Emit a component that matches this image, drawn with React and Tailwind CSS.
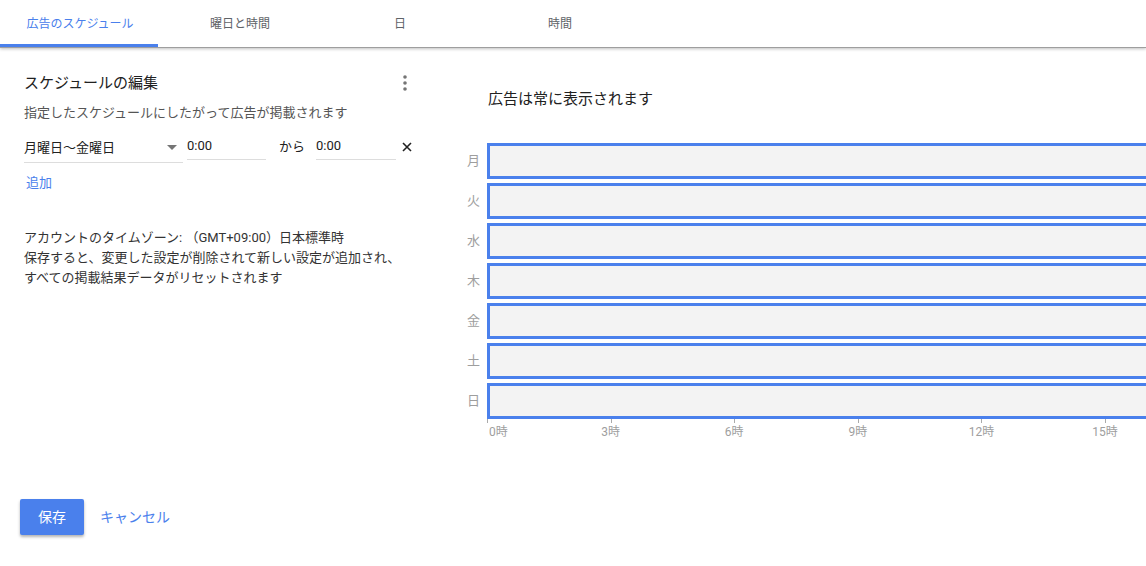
import { useState } from "react";

const days = ["月", "火", "水", "木", "金", "土", "日"];
const hours = [0, 3, 6, 9, 12, 15];
const HOUR = 41.2;

function App() {
  const [tab, setTab] = useState(0);

  const tabs = ["広告のスケジュール", "曜日と時間", "日", "時間"];

  return (
    <div
      className="min-h-screen bg-white overflow-hidden text-[#212121]"
      style={{ fontFamily: 'Roboto, "Noto Sans CJK JP", sans-serif' }}
    >
      {/* Tabs */}
      <div className="h-[48px] flex border-b border-[#9e9e9e] shadow-[0_1px_3px_rgba(0,0,0,0.25)]">
        {tabs.map((t, i) => (
          <button
            key={t}
            onClick={() => setTab(i)}
            className={`relative w-[160px] flex items-center justify-center text-[12px] ${
              tab === i ? "text-[#4a80ec]" : "text-[#5f6368]"
            }`}
          >
            {t}
            {tab === i && (
              <span className="absolute left-0 right-[2px] bottom-0 h-[3px] bg-[#4a80ec]" />
            )}
          </button>
        ))}
      </div>

      <div className="flex">
        {/* Left panel */}
        <div className="w-[460px] shrink-0 pl-[24px] pr-[46px] pt-[25px]">
          <div className="flex items-center justify-between">
            <h2 className="text-[15px] leading-[20px]">スケジュールの編集</h2>
            <svg width="4" height="16" viewBox="0 0 4 16" className="mr-[7px]">
              <circle cx="2" cy="2" r="1.8" fill="#757575" />
              <circle cx="2" cy="8" r="1.8" fill="#757575" />
              <circle cx="2" cy="14" r="1.8" fill="#757575" />
            </svg>
          </div>

          <p className="mt-[10px] text-[13px] leading-[20px] text-[#555]">
            指定したスケジュールにしたがって広告が掲載されます
          </p>

          <div className="mt-[10px] flex items-start text-[13px]">
            <div className="w-[159px] h-[30px] border-b border-[#ddd] flex items-center justify-between pr-[6px]">
              <span>月曜日～金曜日</span>
              <svg width="10" height="5" viewBox="0 0 10 5">
                <path d="M0 0 L10 0 L5 5 Z" fill="#757575" />
              </svg>
            </div>
            <div className="ml-[4px] w-[79px] h-[27px] border-b border-[#ddd] flex items-center">
              0:00
            </div>
            <span className="ml-[13px] h-[27px] flex items-center">から</span>
            <div className="ml-[11px] w-[80px] h-[27px] border-b border-[#ddd] flex items-center">
              0:00
            </div>
            <div className="ml-[6px] h-[27px] flex items-center">
              <svg width="10" height="10" viewBox="0 0 10 10">
                <path d="M1 1 L9 9 M9 1 L1 9" stroke="#212121" strokeWidth="1.6" />
              </svg>
            </div>
          </div>

          <button className="mt-[10px] ml-[2px] text-[13px] leading-[20px] text-[#4a80ec]">
            追加
          </button>

          <div className="mt-[34px] text-[13px] leading-[20px] text-[#333]">
            <p>アカウントのタイムゾーン: （GMT+09:00）日本標準時</p>
            <p>保存すると、変更した設定が削除されて新しい設定が追加され、</p>
            <p>すべての掲載結果データがリセットされます</p>
          </div>
        </div>

        {/* Right panel */}
        <div className="flex-1 min-w-0 pt-[41px]">
          <h2 className="pl-[28px] text-[15px] leading-[20px]">広告は常に表示されます</h2>

          <div className="mt-[34px] flex flex-col gap-[4px]">
            {days.map((d) => (
              <div key={d} className="flex items-center">
                <span className="w-[20px] shrink-0 text-right text-[13px] text-[#9e9e9e]">{d}</span>
                <div className="ml-[7px] w-[986px] shrink-0 h-[36px] border-[3px] border-[#4a80ec] bg-[#f3f3f3]" />
              </div>
            ))}
          </div>

          <div className="ml-[27px] relative h-[24px] w-[986px]">
            {hours.map((h) => (
              <div key={h} className="absolute top-0" style={{ left: h * HOUR }}>
                <span className="absolute left-0 top-0 w-px h-[4px] bg-[#aaa]" />
                <span
                  className="absolute top-[5px] text-[12px] leading-[16px] text-[#9e9e9e] whitespace-nowrap"
                  style={{ transform: h === 0 ? "translateX(2px)" : "translateX(-50%)" }}
                >
                  {h}時
                </span>
              </div>
            ))}
          </div>
        </div>
      </div>

      {/* Footer */}
      <div className="mt-[56px] pl-[20px] flex items-center gap-[16px]">
        <button className="w-[64px] h-[36px] rounded-[2px] bg-[#4a80ec] text-white text-[14px] shadow-[0_2px_3px_rgba(0,0,0,0.3)]">
          保存
        </button>
        <button className="text-[14px] text-[#4a80ec]">キャンセル</button>
      </div>
    </div>
  );
}

export default App;
